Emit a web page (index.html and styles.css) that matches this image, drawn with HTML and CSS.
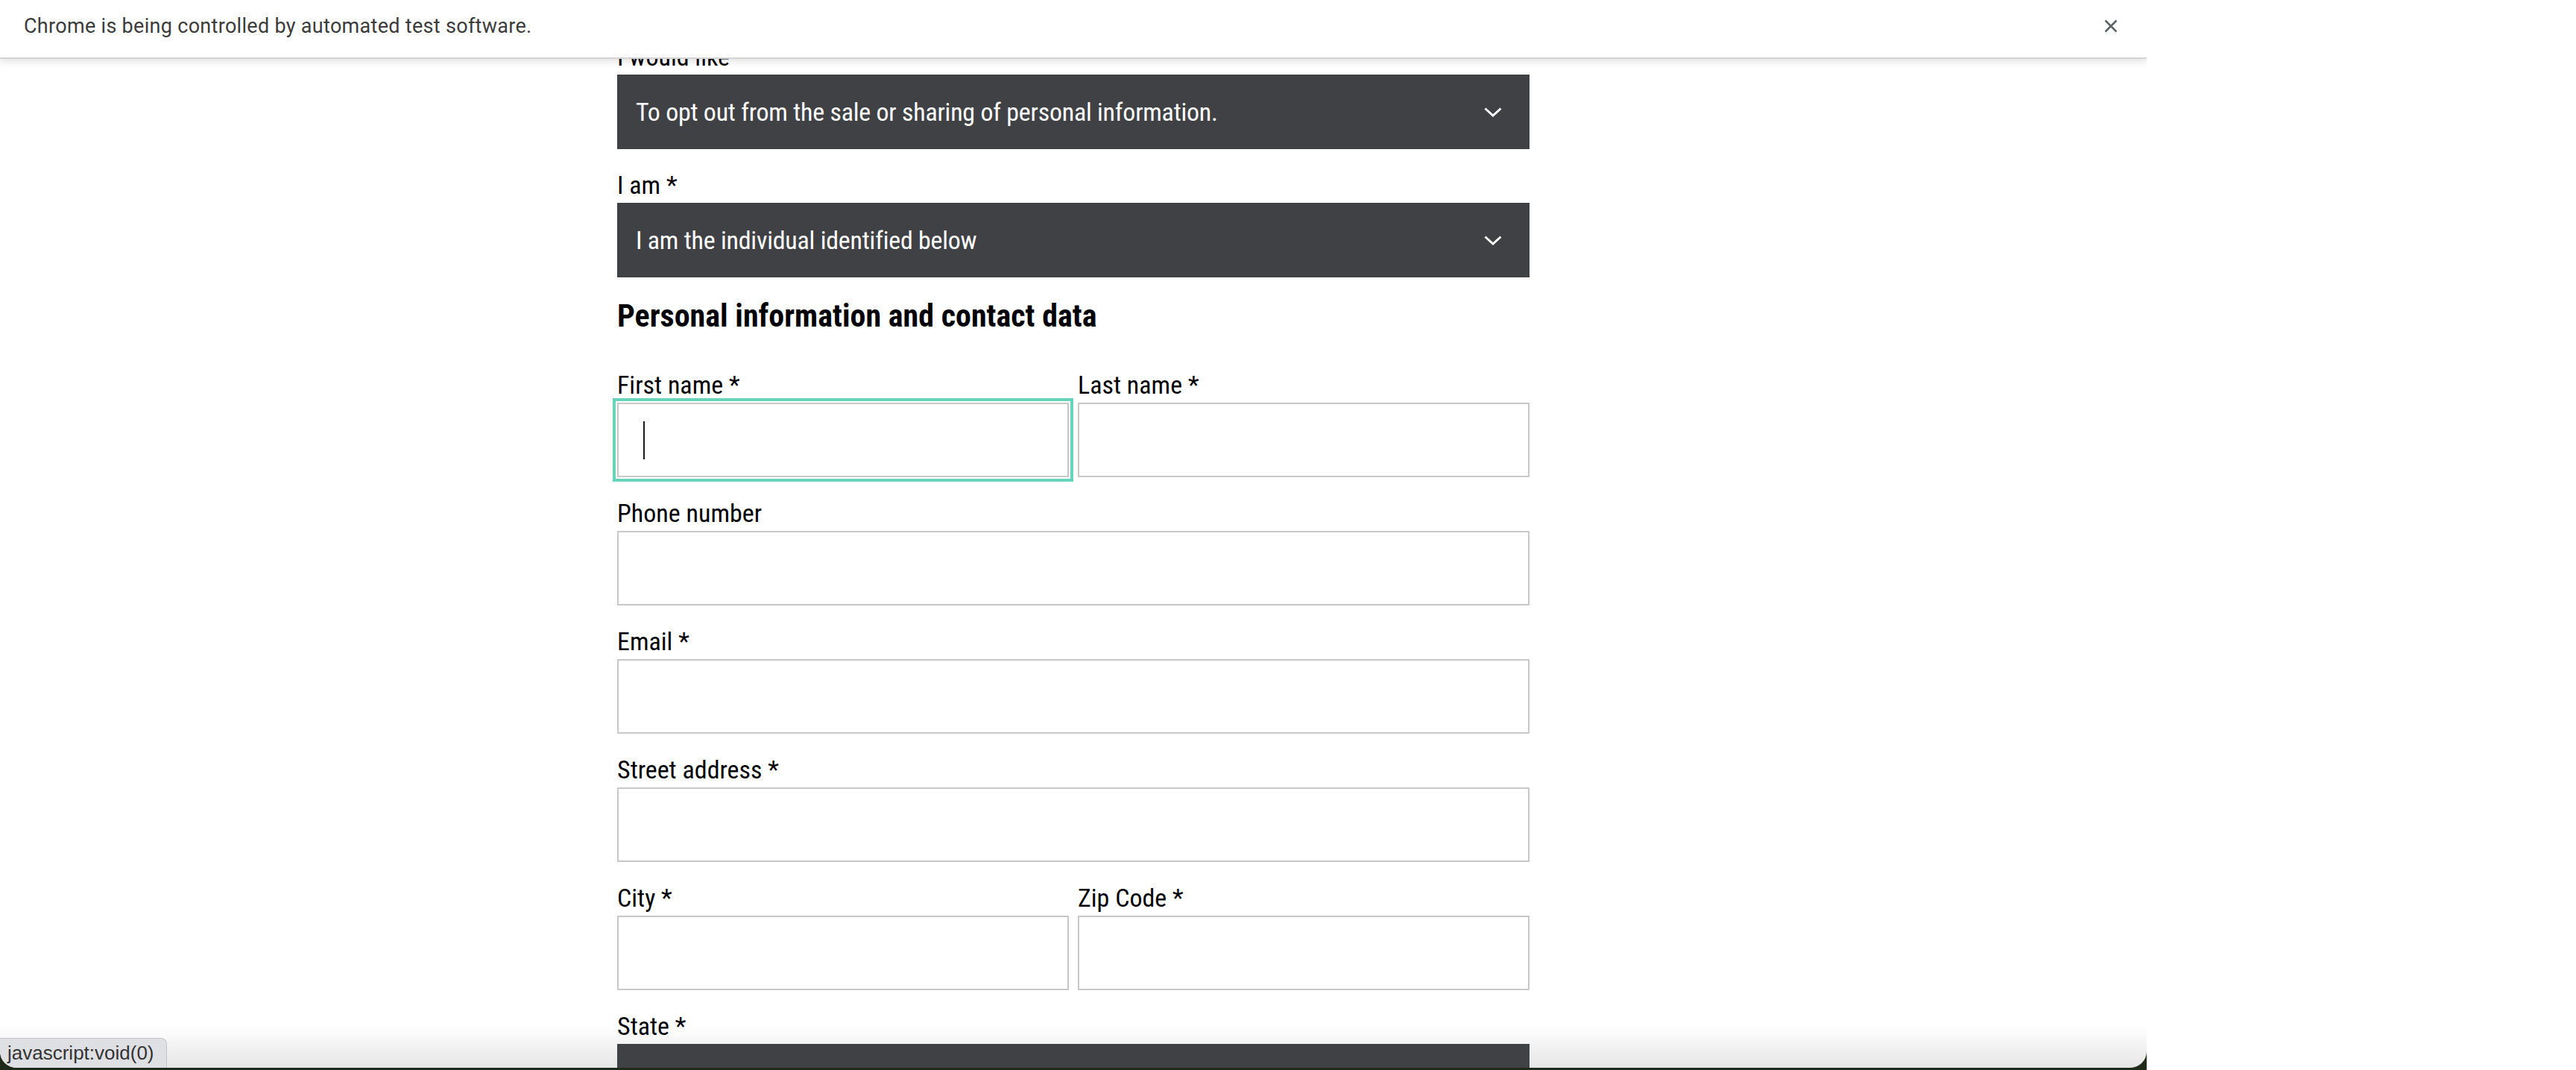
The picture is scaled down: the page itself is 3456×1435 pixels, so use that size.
FILE: index.html
```html
<!DOCTYPE html>
<html lang="en">
<head>
<meta charset="utf-8">
<title>Privacy request form</title>
<link rel="stylesheet" href="styles.css">
</head>
<body>
<div class="screen">
  <div class="desktop">
    <div class="window">
      <div class="infobar">
        <span class="infobar-text">Chrome is being controlled by automated test software.</span>
        <span class="infobar-close" aria-label="Close">
          <svg width="18" height="18" viewBox="0 0 18 18"><path d="M1.5 1.5 L16.5 16.5 M16.5 1.5 L1.5 16.5" stroke="#5f6368" stroke-width="2.6" fill="none"/></svg>
        </span>
      </div>
      <div class="viewport">
        <form class="form">
          <div class="field">
            <label class="label">I would like</label>
            <div class="select"><span class="select-value">To opt out from the sale or sharing of personal information.</span>
              <svg class="chevron" width="24" height="13" viewBox="0 0 24 13"><path d="M1.5 1.5 L12 11 L22.5 1.5" stroke="#fff" stroke-width="3" fill="none"/></svg></div>
          </div>
          <div class="field">
            <label class="label">I am *</label>
            <div class="select"><span class="select-value">I am the individual identified below</span>
              <svg class="chevron" width="24" height="13" viewBox="0 0 24 13"><path d="M1.5 1.5 L12 11 L22.5 1.5" stroke="#fff" stroke-width="3" fill="none"/></svg></div>
          </div>
          <h2 class="heading">Personal information and contact data</h2>
          <div class="row">
            <div class="field">
              <label class="label">First name *</label>
              <div class="input is-focused" role="textbox"><span class="caret"></span></div>
            </div>
            <div class="field">
              <label class="label">Last name *</label>
              <div class="input" role="textbox"></div>
            </div>
          </div>
          <div class="field">
            <label class="label">Phone number</label>
            <div class="input" role="textbox"></div>
          </div>
          <div class="field">
            <label class="label">Email *</label>
            <div class="input" role="textbox"></div>
          </div>
          <div class="field">
            <label class="label">Street address *</label>
            <div class="input" role="textbox"></div>
          </div>
          <div class="row">
            <div class="field">
              <label class="label">City *</label>
              <div class="input" role="textbox"></div>
            </div>
            <div class="field">
              <label class="label">Zip Code *</label>
              <div class="input" role="textbox"></div>
            </div>
          </div>
          <div class="field">
            <label class="label">State *</label>
            <div class="select"><span class="select-value"></span></div>
          </div>
        </form>
        <div class="status">javascript:void(0)</div>
      </div>
    </div>
  </div>
</div>
</body>
</html>
```
FILE: styles.css
```css
html, body {
  margin: 0;
  padding: 0;
}

body {
  background: #ffffff;
  overflow: hidden;
}

.screen {
  display: flex;
  width: 3456px;
  height: 1435px;
  background: #ffffff;
}

.desktop {
  flex: none;
  width: 2880px;
  height: 1435px;
  background: #1f2a1b;
}

.window {
  position: relative;
  display: flex;
  flex-direction: column;
  height: 1432px;
  background: #ffffff;
  border-radius: 0 0 22px 22px;
  overflow: hidden;
}

.infobar {
  position: relative;
  z-index: 2;
  flex: none;
  box-sizing: border-box;
  height: 79px;
  display: flex;
  align-items: center;
  justify-content: space-between;
  padding: 0 39px 8px 32px;
  background: #ffffff;
  border-bottom: 2px solid #d4d4d4;
  box-shadow: 0 3px 10px rgba(0, 0, 0, 0.13);
}

.infobar-text {
  font-family: Roboto, "Liberation Sans", sans-serif;
  font-size: 27px;
  letter-spacing: 0.3px;
  color: #3c3c3c;
}

.infobar-close {
  display: flex;
  width: 18px;
  height: 18px;
}

.viewport {
  position: relative;
  flex: 1;
  overflow: hidden;
}

.viewport::after {
  content: "";
  position: absolute;
  left: 0;
  right: 0;
  bottom: 0;
  height: 56px;
  background: linear-gradient(to bottom, rgba(0, 0, 0, 0), rgba(0, 0, 0, 0.1));
  z-index: 0;
}

.form {
  position: relative;
  z-index: 1;
  width: 1224px;
  margin: -23px auto 0;
  font-family: Roboto, "Liberation Sans", sans-serif;
  font-stretch: 75%;
  color: #010205;
}

.field {
  margin-bottom: 28px;
}

.row {
  display: grid;
  grid-template-columns: 1fr 1fr;
  column-gap: 12px;
}

.label {
  display: block;
  font-size: 34px;
  line-height: 40px;
  margin-bottom: 4px;
}

.select {
  box-sizing: border-box;
  height: 100px;
  display: flex;
  align-items: center;
  justify-content: space-between;
  padding: 0 37px 0 25px;
  background: #404145;
  color: #ffffff;
  font-size: 34px;
}

.select-value {
  letter-spacing: -0.25px;
}

.chevron {
  flex: none;
}

.heading {
  margin: 0 0 48px;
  font-size: 42px;
  line-height: 48px;
  font-weight: bold;
}

.input {
  box-sizing: border-box;
  height: 100px;
  border: 2px solid #c8c8c8;
  background: #ffffff;
}

.input.is-focused {
  display: flex;
  align-items: center;
  padding-left: 33px;
  outline: 4px solid #67d4bb;
  outline-offset: 2px;
}

.caret {
  width: 2px;
  height: 51px;
  background: #1a1a1a;
}

.status {
  position: absolute;
  left: 0;
  bottom: 0;
  z-index: 3;
  box-sizing: border-box;
  height: 40px;
  padding: 0 16px 0 10px;
  display: flex;
  align-items: center;
  background: #dfe0e3;
  border-top: 1px solid #c4c5c8;
  border-right: 1px solid #c4c5c8;
  border-top-right-radius: 8px;
  font-family: "Liberation Sans", Roboto, sans-serif;
  font-size: 26px;
  color: #333333;
}
```
